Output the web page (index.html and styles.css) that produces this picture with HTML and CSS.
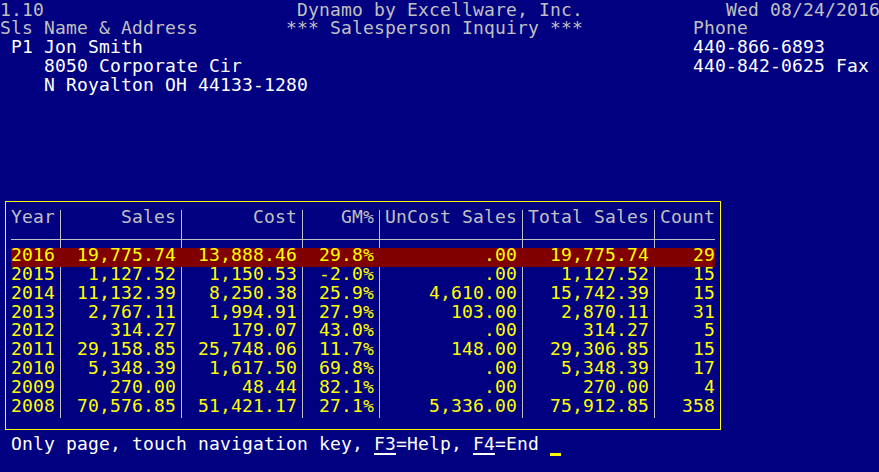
FILE: index.html
```html
<!DOCTYPE html>
<html>
<head>
<meta charset="utf-8">
<title>Salesperson Inquiry</title>
<link rel="stylesheet" href="styles.css">
</head>
<body>
<div class="screen">
  <div class="top">
    <div class="line gray"><span>1.10</span><span> Dynamo by Excellware, Inc.</span><span>   Wed 08/24/2016</span></div>
    <div class="line gray"><span>Sls Name &amp; Address</span><span>*** Salesperson Inquiry ***</span><span>Phone</span></div>
    <div class="line white"><span> P1 Jon Smith</span><span></span><span>440-866-6893</span></div>
    <div class="line white"><span>    8050 Corporate Cir</span><span></span><span>440-842-0625 Fax</span></div>
    <div class="line white"><span>    N Royalton OH 44133-1280</span><span></span><span></span></div>
  </div>

  <div class="box">
    <div class="trow head">
      <span class="c year">Year</span><span class="v"></span>
      <span class="c sales">Sales</span><span class="v"></span>
      <span class="c cost">Cost</span><span class="v"></span>
      <span class="c gm">GM%</span><span class="v"></span>
      <span class="c uncost">UnCost Sales</span><span class="v"></span>
      <span class="c total">Total Sales</span><span class="v"></span>
      <span class="c count">Count</span>
    </div>
    <div class="trow rule">
      <span class="c year"></span><span class="v"></span>
      <span class="c sales"></span><span class="v"></span>
      <span class="c cost"></span><span class="v"></span>
      <span class="c gm"></span><span class="v"></span>
      <span class="c uncost"></span><span class="v"></span>
      <span class="c total"></span><span class="v"></span>
      <span class="c count"></span>
    </div>
    <div class="trow data hl">
      <span class="c year">2016</span><span class="v"></span>
      <span class="c sales">19,775.74</span><span class="v"></span>
      <span class="c cost">13,888.46</span><span class="v"></span>
      <span class="c gm">29.8%</span><span class="v"></span>
      <span class="c uncost">.00</span><span class="v"></span>
      <span class="c total">19,775.74</span><span class="v"></span>
      <span class="c count">29</span>
    </div>
    <div class="trow data">
      <span class="c year">2015</span><span class="v"></span>
      <span class="c sales">1,127.52</span><span class="v"></span>
      <span class="c cost">1,150.53</span><span class="v"></span>
      <span class="c gm">-2.0%</span><span class="v"></span>
      <span class="c uncost">.00</span><span class="v"></span>
      <span class="c total">1,127.52</span><span class="v"></span>
      <span class="c count">15</span>
    </div>
    <div class="trow data">
      <span class="c year">2014</span><span class="v"></span>
      <span class="c sales">11,132.39</span><span class="v"></span>
      <span class="c cost">8,250.38</span><span class="v"></span>
      <span class="c gm">25.9%</span><span class="v"></span>
      <span class="c uncost">4,610.00</span><span class="v"></span>
      <span class="c total">15,742.39</span><span class="v"></span>
      <span class="c count">15</span>
    </div>
    <div class="trow data">
      <span class="c year">2013</span><span class="v"></span>
      <span class="c sales">2,767.11</span><span class="v"></span>
      <span class="c cost">1,994.91</span><span class="v"></span>
      <span class="c gm">27.9%</span><span class="v"></span>
      <span class="c uncost">103.00</span><span class="v"></span>
      <span class="c total">2,870.11</span><span class="v"></span>
      <span class="c count">31</span>
    </div>
    <div class="trow data">
      <span class="c year">2012</span><span class="v"></span>
      <span class="c sales">314.27</span><span class="v"></span>
      <span class="c cost">179.07</span><span class="v"></span>
      <span class="c gm">43.0%</span><span class="v"></span>
      <span class="c uncost">.00</span><span class="v"></span>
      <span class="c total">314.27</span><span class="v"></span>
      <span class="c count">5</span>
    </div>
    <div class="trow data">
      <span class="c year">2011</span><span class="v"></span>
      <span class="c sales">29,158.85</span><span class="v"></span>
      <span class="c cost">25,748.06</span><span class="v"></span>
      <span class="c gm">11.7%</span><span class="v"></span>
      <span class="c uncost">148.00</span><span class="v"></span>
      <span class="c total">29,306.85</span><span class="v"></span>
      <span class="c count">15</span>
    </div>
    <div class="trow data">
      <span class="c year">2010</span><span class="v"></span>
      <span class="c sales">5,348.39</span><span class="v"></span>
      <span class="c cost">1,617.50</span><span class="v"></span>
      <span class="c gm">69.8%</span><span class="v"></span>
      <span class="c uncost">.00</span><span class="v"></span>
      <span class="c total">5,348.39</span><span class="v"></span>
      <span class="c count">17</span>
    </div>
    <div class="trow data">
      <span class="c year">2009</span><span class="v"></span>
      <span class="c sales">270.00</span><span class="v"></span>
      <span class="c cost">48.44</span><span class="v"></span>
      <span class="c gm">82.1%</span><span class="v"></span>
      <span class="c uncost">.00</span><span class="v"></span>
      <span class="c total">270.00</span><span class="v"></span>
      <span class="c count">4</span>
    </div>
    <div class="trow data">
      <span class="c year">2008</span><span class="v"></span>
      <span class="c sales">70,576.85</span><span class="v"></span>
      <span class="c cost">51,421.17</span><span class="v"></span>
      <span class="c gm">27.1%</span><span class="v"></span>
      <span class="c uncost">5,336.00</span><span class="v"></span>
      <span class="c total">75,912.85</span><span class="v"></span>
      <span class="c count">358</span>
    </div>
  </div>

  <div class="foot"> Only page, touch navigation key, <span class="key">F3</span>=Help, <span class="key">F4</span>=End <span class="cursor"></span></div>
</div>
</body>
</html>
```

FILE: styles.css
```css
:root {
  --rh: 18.88px;
  --navy: #000080;
  --gray: #c0c0c0;
  --white: #ffffff;
  --yellow: #ffff00;
  --maroon: #800000;
}

html, body {
  margin: 0;
  padding: 0;
  background: var(--navy);
  overflow: hidden;
}

body {
  font-family: "DejaVu Sans Mono", monospace;
  font-size: 18px;
  letter-spacing: 0.162px;
  line-height: 14.75px;
}

.screen {
  width: 880px;
  padding-top: 2.5px;
}

.line {
  height: var(--rh);
  display: grid;
  grid-template-columns: 286px 407px 187px;
  white-space: pre;
}

.gray { color: var(--gray); }
.white { color: var(--white); }

/* table box */
.box {
  margin: 104.1px 0 0 5px;
  width: 704px;
  padding: 8.2px 5px 11.12px;
  border: 1px solid var(--yellow);
}

.trow {
  display: flex;
  height: var(--rh);
  white-space: pre;
}

.trow .c { display: block; text-align: right; }
.trow .year { width: 44px; text-align: left; }
.trow .sales { width: 110px; }
.trow .cost { width: 110px; }
.trow .gm { width: 66px; }
.trow .uncost { width: 132px; }
.trow .total { width: 121px; }
.trow .count { width: 55px; }

.trow .v {
  width: 11px;
  background: linear-gradient(var(--gray), var(--gray)) 5px 0 / 1px 100% no-repeat;
}

.head { color: var(--gray); }

.rule {
  background: linear-gradient(var(--gray), var(--gray)) 0 10px / 100% 1px no-repeat;
}

.data { color: var(--yellow); }

.hl { background: var(--maroon); }
.hl .v { background: none; }

/* footer */
.foot {
  margin-top: 6.74px;
  height: var(--rh);
  white-space: pre;
  color: var(--white);
}

.key {
  text-decoration: underline;
  text-decoration-thickness: 2px;
  text-underline-offset: 3px;
}

.cursor {
  display: inline-block;
  width: 11px;
  height: 3px;
  background: var(--yellow);
  vertical-align: -6.7px;
}
```
